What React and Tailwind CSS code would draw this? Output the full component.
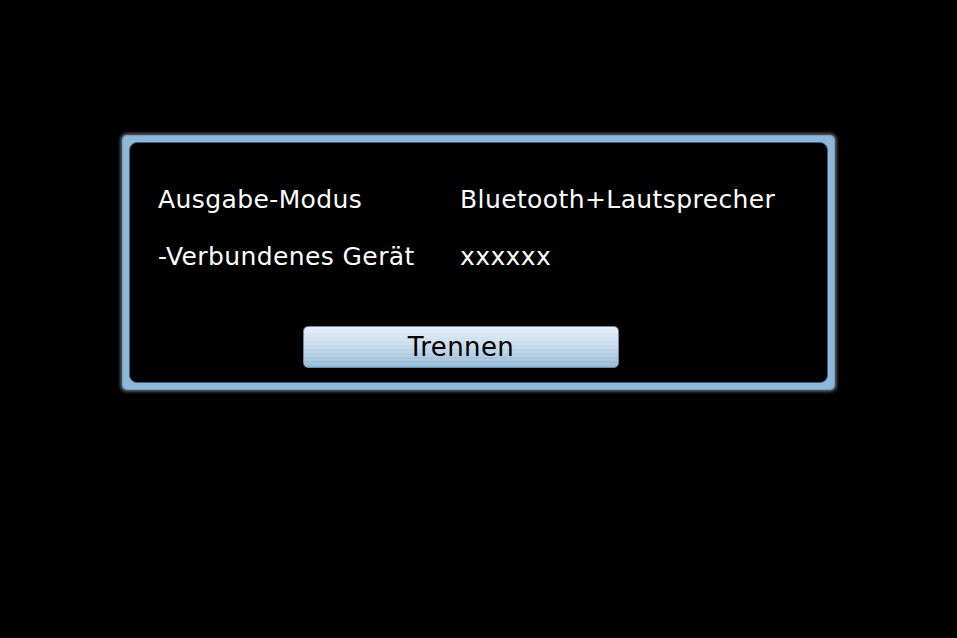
import React from "react";

const rows = [
  { label: "Ausgabe-Modus", value: "Bluetooth+Lautsprecher" },
  { label: "-Verbundenes Gerät", value: "xxxxxx" },
];

export default function App() {
  return (
    <div
      className="w-[957px] h-[638px] bg-black pt-[135px] pl-[122px]"
      style={{ fontFamily: '"DejaVu Sans", "Liberation Sans", sans-serif' }}
    >
      <div className="w-[713px] h-[255px] rounded-[5px] bg-[#8db8dc] p-[7px] shadow-[0_0_3px_2px_#555,inset_0_0_2px_#4a6a88]">
        <div className="h-full rounded-[8px] bg-black border border-[#3d5f80] flex flex-col pl-[28px] pt-[39px]">
          {rows.map((r) => (
            <div key={r.label} className="flex h-[57px] items-start text-white text-[25px] leading-[36px] tracking-[0.4px]">
              <span className="w-[302px]">{r.label}</span>
              <span>{r.value}</span>
            </div>
          ))}
          <div className="flex pl-[145px] mt-[30px]">
            <button className="w-[316px] h-[42px] rounded-[5px] border border-[#6f8aa3] bg-[repeating-linear-gradient(rgba(255,255,255,0.12)_0_2px,transparent_2px_4px),linear-gradient(#e4eef7,#c4d8ea_50%,#8fb7d6)] text-black text-[26px] leading-[38px] tracking-[0.4px]">
              Trennen
            </button>
          </div>
        </div>
      </div>
    </div>
  );
}
